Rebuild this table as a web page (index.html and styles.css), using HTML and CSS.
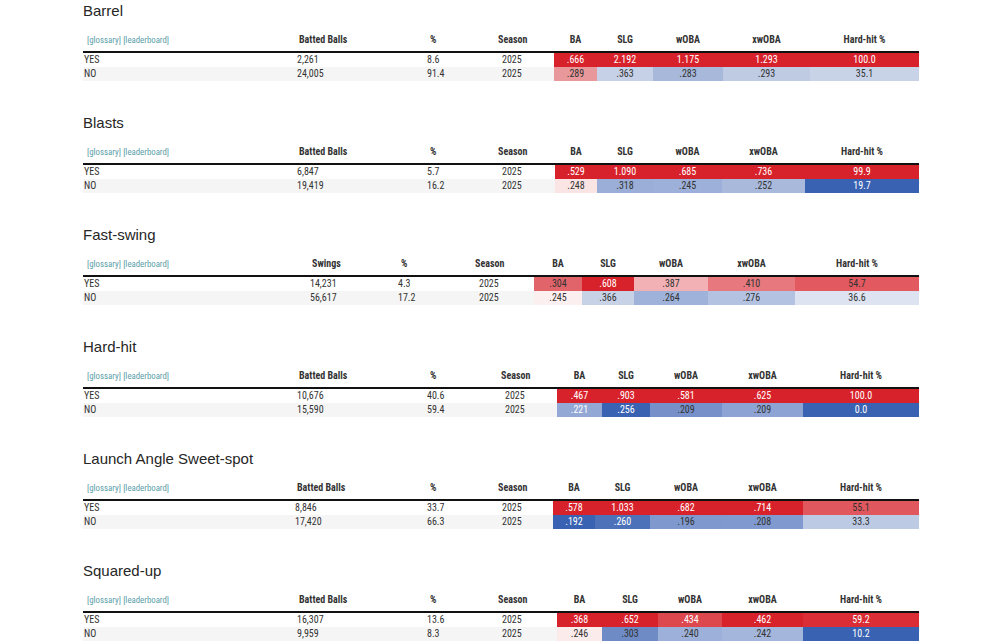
FILE: index.html
```html
<!DOCTYPE html>
<html lang="en">
<head>
<meta charset="utf-8">
<title>Statcast splits</title>
<link rel="stylesheet" href="styles.css">
</head>
<body>
<div class="page">

  <section class="stat">
    <h2 class="stat-title">Barrel</h2>
    <div class="tbl cols-barrel">
      <div class="row head">
        <div class="cell lab"><a class="links">[glossary]</a> <a class="links">[leaderboard]</a></div>
        <div class="cell cnt">Batted Balls</div>
        <div class="cell pct">%</div>
        <div class="cell sea">Season</div>
        <div class="cell m">BA</div>
        <div class="cell m">SLG</div>
        <div class="cell m">wOBA</div>
        <div class="cell m">xwOBA</div>
        <div class="cell m">Hard-hit %</div>
      </div>
      <div class="row">
        <div class="cell lab">YES</div>
        <div class="cell cnt">2,261</div>
        <div class="cell pct">8.6</div>
        <div class="cell sea">2025</div>
        <div class="cell m hot" style="background:#d8222b">.666</div>
        <div class="cell m hot" style="background:#d8222b">2.192</div>
        <div class="cell m hot" style="background:#d8222b">1.175</div>
        <div class="cell m hot" style="background:#d8222b">1.293</div>
        <div class="cell m hot" style="background:#d8222b">100.0</div>
      </div>
      <div class="row alt">
        <div class="cell lab">NO</div>
        <div class="cell cnt">24,005</div>
        <div class="cell pct">91.4</div>
        <div class="cell sea">2025</div>
        <div class="cell m" style="background:#e8979a">.289</div>
        <div class="cell m" style="background:#c6d0e6">.363</div>
        <div class="cell m" style="background:#a7b8db">.283</div>
        <div class="cell m" style="background:#bfcae3">.293</div>
        <div class="cell m" style="background:#c9d3e7">35.1</div>
      </div>
    </div>
  </section>

  <section class="stat">
    <h2 class="stat-title">Blasts</h2>
    <div class="tbl cols-blasts">
      <div class="row head">
        <div class="cell lab"><a class="links">[glossary]</a> <a class="links">[leaderboard]</a></div>
        <div class="cell cnt">Batted Balls</div>
        <div class="cell pct">%</div>
        <div class="cell sea">Season</div>
        <div class="cell m">BA</div>
        <div class="cell m">SLG</div>
        <div class="cell m">wOBA</div>
        <div class="cell m">xwOBA</div>
        <div class="cell m">Hard-hit %</div>
      </div>
      <div class="row">
        <div class="cell lab">YES</div>
        <div class="cell cnt">6,847</div>
        <div class="cell pct">5.7</div>
        <div class="cell sea">2025</div>
        <div class="cell m hot" style="background:#d8222b">.529</div>
        <div class="cell m hot" style="background:#d8222b">1.090</div>
        <div class="cell m hot" style="background:#d8222b">.685</div>
        <div class="cell m hot" style="background:#d8222b">.736</div>
        <div class="cell m hot" style="background:#d8222b">99.9</div>
      </div>
      <div class="row alt">
        <div class="cell lab">NO</div>
        <div class="cell cnt">19,419</div>
        <div class="cell pct">16.2</div>
        <div class="cell sea">2025</div>
        <div class="cell m" style="background:#fbe4e4">.248</div>
        <div class="cell m" style="background:#9aaed7">.318</div>
        <div class="cell m" style="background:#9db0d9">.245</div>
        <div class="cell m" style="background:#a9b9dc">.252</div>
        <div class="cell m hot" style="background:#3a62b2">19.7</div>
      </div>
    </div>
  </section>

  <section class="stat">
    <h2 class="stat-title">Fast-swing</h2>
    <div class="tbl cols-fast">
      <div class="row head">
        <div class="cell lab"><a class="links">[glossary]</a> <a class="links">[leaderboard]</a></div>
        <div class="cell cnt">Swings</div>
        <div class="cell pct">%</div>
        <div class="cell sea">Season</div>
        <div class="cell m">BA</div>
        <div class="cell m">SLG</div>
        <div class="cell m">wOBA</div>
        <div class="cell m">xwOBA</div>
        <div class="cell m">Hard-hit %</div>
      </div>
      <div class="row">
        <div class="cell lab">YES</div>
        <div class="cell cnt">14,231</div>
        <div class="cell pct">4.3</div>
        <div class="cell sea">2025</div>
        <div class="cell m" style="background:#e1646a">.304</div>
        <div class="cell m hot" style="background:#d8222b">.608</div>
        <div class="cell m" style="background:#f2b1b4">.387</div>
        <div class="cell m" style="background:#e7787d">.410</div>
        <div class="cell m" style="background:#e2595f">54.7</div>
      </div>
      <div class="row alt">
        <div class="cell lab">NO</div>
        <div class="cell cnt">56,617</div>
        <div class="cell pct">17.2</div>
        <div class="cell sea">2025</div>
        <div class="cell m" style="background:#fcefef">.245</div>
        <div class="cell m" style="background:#c8d2e7">.366</div>
        <div class="cell m" style="background:#9fb2da">.264</div>
        <div class="cell m" style="background:#b3c2e1">.276</div>
        <div class="cell m" style="background:#dde3f1">36.6</div>
      </div>
    </div>
  </section>

  <section class="stat">
    <h2 class="stat-title">Hard-hit</h2>
    <div class="tbl cols-hard">
      <div class="row head">
        <div class="cell lab"><a class="links">[glossary]</a> <a class="links">[leaderboard]</a></div>
        <div class="cell cnt">Batted Balls</div>
        <div class="cell pct">%</div>
        <div class="cell sea">Season</div>
        <div class="cell m">BA</div>
        <div class="cell m">SLG</div>
        <div class="cell m">wOBA</div>
        <div class="cell m">xwOBA</div>
        <div class="cell m">Hard-hit %</div>
      </div>
      <div class="row">
        <div class="cell lab">YES</div>
        <div class="cell cnt">10,676</div>
        <div class="cell pct">40.6</div>
        <div class="cell sea">2025</div>
        <div class="cell m hot" style="background:#d8222b">.467</div>
        <div class="cell m hot" style="background:#d8222b">.903</div>
        <div class="cell m hot" style="background:#d8222b">.581</div>
        <div class="cell m hot" style="background:#d8222b">.625</div>
        <div class="cell m hot" style="background:#d8222b">100.0</div>
      </div>
      <div class="row alt">
        <div class="cell lab">NO</div>
        <div class="cell cnt">15,590</div>
        <div class="cell pct">59.4</div>
        <div class="cell sea">2025</div>
        <div class="cell m hot" style="background:#93a8d5">.221</div>
        <div class="cell m hot" style="background:#3a62b2">.256</div>
        <div class="cell m" style="background:#7690ca">.209</div>
        <div class="cell m" style="background:#8da3d3">.209</div>
        <div class="cell m hot" style="background:#3a62b2">0.0</div>
      </div>
    </div>
  </section>

  <section class="stat">
    <h2 class="stat-title">Launch Angle Sweet-spot</h2>
    <div class="tbl cols-launch">
      <div class="row head">
        <div class="cell lab"><a class="links">[glossary]</a> <a class="links">[leaderboard]</a></div>
        <div class="cell cnt">Batted Balls</div>
        <div class="cell pct">%</div>
        <div class="cell sea">Season</div>
        <div class="cell m">BA</div>
        <div class="cell m">SLG</div>
        <div class="cell m">wOBA</div>
        <div class="cell m">xwOBA</div>
        <div class="cell m">Hard-hit %</div>
      </div>
      <div class="row">
        <div class="cell lab">YES</div>
        <div class="cell cnt">8,846</div>
        <div class="cell pct">33.7</div>
        <div class="cell sea">2025</div>
        <div class="cell m hot" style="background:#d8222b">.578</div>
        <div class="cell m hot" style="background:#d8222b">1.033</div>
        <div class="cell m hot" style="background:#d8222b">.682</div>
        <div class="cell m hot" style="background:#d8222b">.714</div>
        <div class="cell m" style="background:#e0585e">55.1</div>
      </div>
      <div class="row alt">
        <div class="cell lab">NO</div>
        <div class="cell cnt">17,420</div>
        <div class="cell pct">66.3</div>
        <div class="cell sea">2025</div>
        <div class="cell m hot" style="background:#3a62b2">.192</div>
        <div class="cell m hot" style="background:#4d72ba">.260</div>
        <div class="cell m" style="background:#7f98cd">.196</div>
        <div class="cell m" style="background:#8099ce">.208</div>
        <div class="cell m" style="background:#bccae4">33.3</div>
      </div>
    </div>
  </section>

  <section class="stat">
    <h2 class="stat-title">Squared-up</h2>
    <div class="tbl cols-squared">
      <div class="row head">
        <div class="cell lab"><a class="links">[glossary]</a> <a class="links">[leaderboard]</a></div>
        <div class="cell cnt">Batted Balls</div>
        <div class="cell pct">%</div>
        <div class="cell sea">Season</div>
        <div class="cell m">BA</div>
        <div class="cell m">SLG</div>
        <div class="cell m">wOBA</div>
        <div class="cell m">xwOBA</div>
        <div class="cell m">Hard-hit %</div>
      </div>
      <div class="row">
        <div class="cell lab">YES</div>
        <div class="cell cnt">16,307</div>
        <div class="cell pct">13.6</div>
        <div class="cell sea">2025</div>
        <div class="cell m hot" style="background:#d8222b">.368</div>
        <div class="cell m hot" style="background:#d8222b">.652</div>
        <div class="cell m hot" style="background:#dd474e">.434</div>
        <div class="cell m hot" style="background:#d8222b">.462</div>
        <div class="cell m hot" style="background:#da2d35">59.2</div>
      </div>
      <div class="row alt">
        <div class="cell lab">NO</div>
        <div class="cell cnt">9,959</div>
        <div class="cell pct">8.3</div>
        <div class="cell sea">2025</div>
        <div class="cell m" style="background:#fcebeb">.246</div>
        <div class="cell m" style="background:#6e8bc6">.303</div>
        <div class="cell m" style="background:#9db0d9">.240</div>
        <div class="cell m" style="background:#a4b6db">.242</div>
        <div class="cell m hot" style="background:#3a62b2">10.2</div>
      </div>
    </div>
  </section>

</div>
</body>
</html>
```

FILE: styles.css
```css
html, body {
  margin: 0;
  padding: 0;
  background: #ffffff;
}

body {
  font-family: "Roboto Condensed", "Liberation Sans Narrow", Roboto, sans-serif;
  font-stretch: condensed;
  color: #333333;
}

.page {
  width: 836px;
  margin-left: 83px;
  padding-top: 2px;
  display: flex;
  flex-direction: column;
  gap: 33px;
}

.stat-title {
  margin: 0;
  font-family: "Liberation Sans", Arial, sans-serif;
  font-stretch: normal;
  font-weight: 400;
  font-size: 15px;
  line-height: 18px;
  color: #262626;
}

.tbl {
  margin-top: 7px;
}

.cols-barrel  { --cols: 204px 130px 71px 66px 43px 56px 70px 87px 109px; }
.cols-blasts  { --cols: 204px 130px 71px 67px 42px 56px 69px 83px 114px; }
.cols-fast    { --cols: 217px 88px 77px 69px 48px 52px 74px 87px 124px; }
.cols-hard    { --cols: 204px 130px 74px 66px 45px 48px 72px 81px 116px; }
.cols-launch  { --cols: 202px 132px 71px 65px 42px 55px 72px 81px 116px; }
.cols-squared { --cols: 204px 130px 71px 69px 45px 56px 64px 81px 116px; }

.row {
  display: grid;
  grid-template-columns: var(--cols);
  height: 14px;
  font-size: 10px;
  line-height: 14px;
  color: #333333;
}

.row.alt {
  background: #f5f5f5;
}

.row.head {
  height: 24px;
  line-height: 25px;
  font-weight: 700;
  border-bottom: 2px solid #111111;
  color: #333333;
}

.cell {
  white-space: nowrap;
  overflow: hidden;
}

.lab {
  padding-left: 1px;
}

.head .lab {
  padding-left: 4px;
}

.links {
  font-size: 8.8px;
  font-weight: 400;
  color: #5a9ea8;
  text-decoration: none;
}

.cnt,
.pct,
.sea {
  padding-left: 10px;
}

.head .cnt { padding-left: 12px; }
.head .pct { padding-left: 13px; }
.row:not(.head) .sea { padding-left: 14px; }

.m {
  text-align: center;
}

.m.hot {
  color: #ffffff;
}
```
